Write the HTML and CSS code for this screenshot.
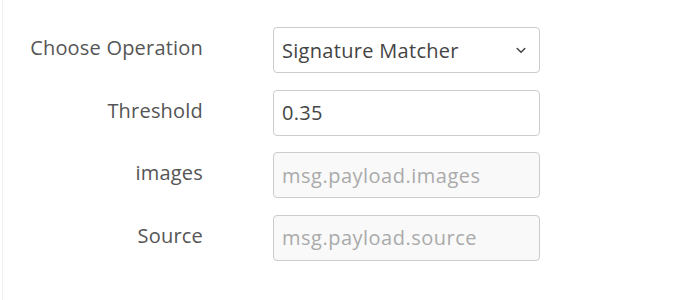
FILE: index.html
```html
<!DOCTYPE html>
<html>
<head>
<meta charset="utf-8">
<link rel="stylesheet" href="styles.css">
</head>
<body>
<div class="panel">
  <form class="form">
    <label class="label">Choose Operation</label>
    <div class="field select">
      <span class="value">Signature Matcher</span>
      <svg class="chev" width="10" height="7" viewBox="0 0 10 7"><path d="M1.2 1.5 L5 5.2 L8.8 1.5" fill="none" stroke="#444" stroke-width="1.5" stroke-linecap="round" stroke-linejoin="round"/></svg>
    </div>
    <label class="label">Threshold</label>
    <div class="field"><span class="value">0.35</span></div>
    <label class="label">images</label>
    <div class="field disabled"><span class="placeholder">msg.payload.images</span></div>
    <label class="label">Source</label>
    <div class="field disabled"><span class="placeholder">msg.payload.source</span></div>
  </form>
</div>
</body>
</html>
```
FILE: styles.css
```css
html, body {
  margin: 0;
  padding: 0;
  background: #ffffff;
}
body {
  font-family: "Open Sans", "Liberation Sans", sans-serif;
  width: 681px;
  height: 300px;
  overflow: hidden;
}
.panel {
  margin-left: 2px;
  border-left: 1px solid #f1f1f1;
  height: 300px;
  box-sizing: border-box;
  padding-top: 27px;
}
.form {
  display: grid;
  grid-template-columns: 200px 267px;
  grid-auto-rows: 46px;
  column-gap: 70px;
  row-gap: 16.67px;
}
.label {
  font-size: 20px;
  letter-spacing: 0.2px;
  color: #555555;
  text-align: right;
  align-self: center;
  margin-top: -5px;
}
.field {
  box-sizing: border-box;
  border: 1px solid #cccccc;
  border-radius: 4px;
  background: #ffffff;
  display: flex;
  align-items: center;
  padding: 0 13px 0 8px;
  font-size: 20px;
  letter-spacing: 0.3px;
}
.value {
  color: #444444;
}
.placeholder {
  color: #aaaaaa;
  letter-spacing: 0.5px;
}
.disabled {
  background: #f9f9f9;
}
.select {
  justify-content: space-between;
}
.chev {
  display: block;
  margin-top: 1px;
}
```
